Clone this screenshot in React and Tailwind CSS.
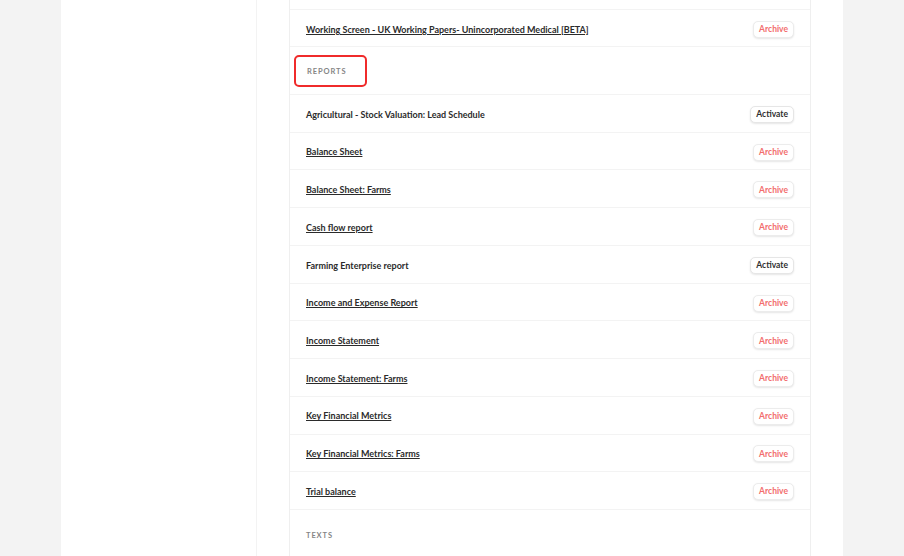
import React from 'react';

const reports = [
  { name: 'Agricultural - Stock Valuation: Lead Schedule', active: false },
  { name: 'Balance Sheet', active: true },
  { name: 'Balance Sheet: Farms', active: true },
  { name: 'Cash flow report', active: true },
  { name: 'Farming Enterprise report', active: false },
  { name: 'Income and Expense Report', active: true },
  { name: 'Income Statement', active: true },
  { name: 'Income Statement: Farms', active: true },
  { name: 'Key Financial Metrics', active: true },
  { name: 'Key Financial Metrics: Farms', active: true },
  { name: 'Trial balance', active: true },
];

const ActionButton = ({ active }) =>
  active ? (
    <button className="h-[17px] px-[5px] rounded-[5px] border border-[#ececec] bg-white shadow-[0_1px_2px_rgba(0,0,0,0.1)] text-[8.5px] leading-none font-bold text-[#f26d6d]">
      Archive
    </button>
  ) : (
    <button className="h-[17px] px-[5px] rounded-[5px] border border-[#e6e6e6] bg-white shadow-[0_1px_2px_rgba(0,0,0,0.1)] text-[8.5px] leading-none font-bold text-[#2f2f2f]">
      Activate
    </button>
  );

const Row = ({ name, active }) => (
  <div className="h-[37.8px] flex items-center justify-between pl-4 pr-4 pt-[2px] border-b border-[#f3f3f3]">
    {active ? (
      <a href="#" className="text-[9px] font-bold text-[#2b2b2b] underline underline-offset-[1px]">
        {name}
      </a>
    ) : (
      <span className="text-[9px] font-bold text-[#2b2b2b]">{name}</span>
    )}
    <ActionButton active={active} />
  </div>
);

export default function App() {
  return (
    <div className="h-[556px] overflow-hidden bg-[#f3f3f3] flex justify-start font-['Lato',sans-serif]">
      <div className="ml-[61px] w-[782px] bg-white flex">
        <div className="w-[196px] border-r border-[#f3f3f3] shrink-0" />
        <div className="ml-[32px] w-[522px] border-x border-[#efefef] flex flex-col">
          <div className="h-[10px] border-b border-[#f3f3f3] shrink-0" />
          <div className="h-[37px] flex items-center justify-between pl-4 pr-4 pt-[3px] border-b border-[#f3f3f3] shrink-0">
            <a href="#" className="text-[9px] font-bold text-[#2b2b2b] underline underline-offset-[1px]">
              Working Screen - UK Working Papers- Unincorporated Medical [BETA]
            </a>
            <ActionButton active />
          </div>
          <div className="h-[48px] flex items-center pl-[4px] pt-[1px] border-b border-[#f3f3f3] shrink-0">
            <div className="h-[32px] w-[73px] flex items-center pl-[11px] pt-[1px] rounded-[5px] border-2 border-[#f02b2b]">
              <span className="text-[7.5px] font-bold tracking-[0.9px] text-[#858585]">REPORTS</span>
            </div>
          </div>
          {reports.map((r) => (
            <Row key={r.name} {...r} />
          ))}
          <div className="h-[46px] flex items-center pl-4 pt-[5px] shrink-0">
            <span className="text-[7.5px] font-bold tracking-[0.9px] text-[#858585]">TEXTS</span>
          </div>
        </div>
      </div>
    </div>
  );
}
